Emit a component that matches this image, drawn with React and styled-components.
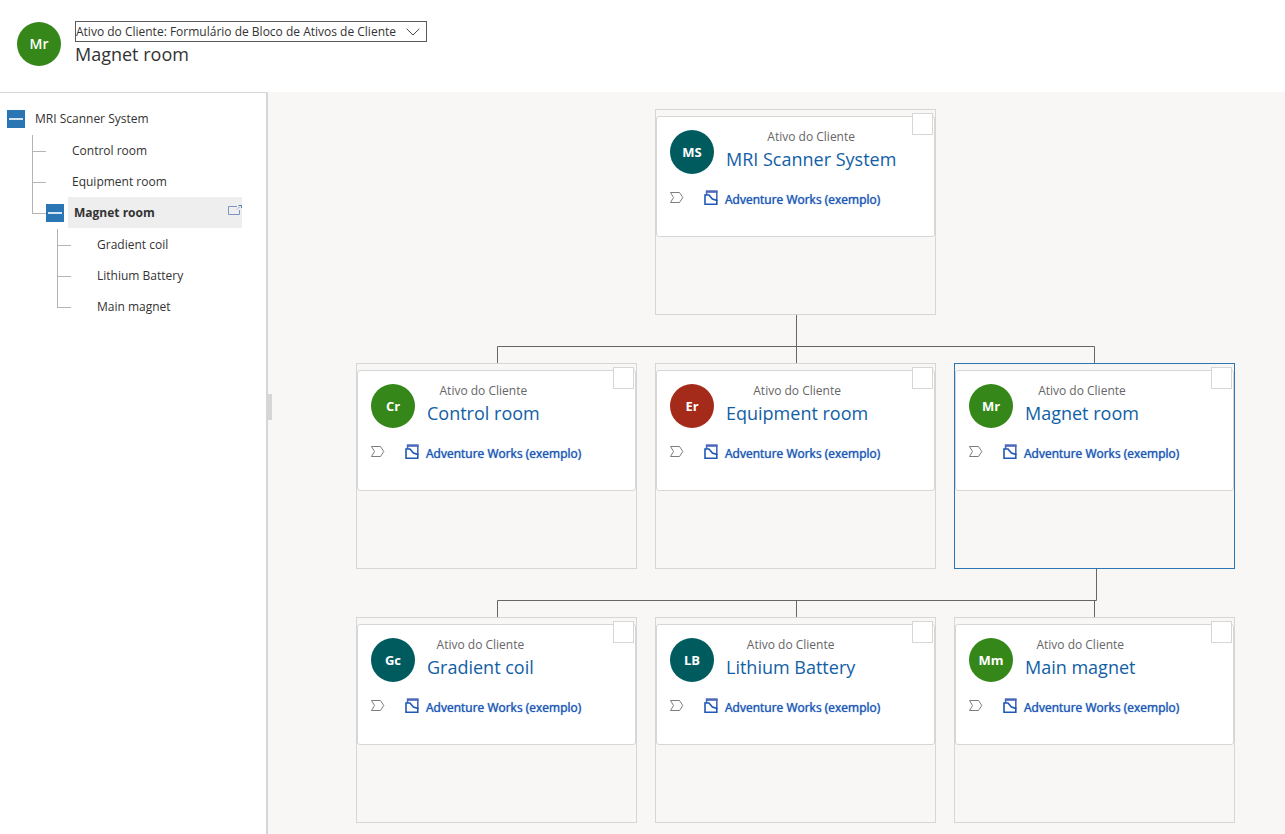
import React from 'react';
import styled, { createGlobalStyle } from 'styled-components';

const GlobalStyle = createGlobalStyle`
    *, *::before, *::after {
        box-sizing: border-box;
    }

    body {
        margin: 0;
        background: #ffffff;
        color: #333333;
        font-family: 'Open Sans', 'Noto Sans', sans-serif;
        font-size: 12px;
        line-height: 16px;
    }

    a {
        color: inherit;
        text-decoration: none;
    }

    button, input, select {
        margin: 0;
        font: inherit;
        color: inherit;
    }
`;

const GREEN = '#348718';
const TEAL = '#005b5f';
const RED = '#a42a1a';

const Page = styled.div`
    min-height: 100vh;
    display: flex;
    flex-direction: column;
`;

const Header = styled.header`
    display: flex;
    align-items: center;
    gap: 14px;
    height: 92px;
    padding: 0 17px 4px;
`;

const Avatar = styled.div`
    flex: none;
    display: flex;
    align-items: center;
    justify-content: center;
    width: 44px;
    height: 44px;
    border-radius: 50%;
    background: ${props => props.$color};
    color: #ffffff;
    font-size: ${props => props.$bold ? 13 : 14}px;
    font-weight: ${props => props.$bold ? 700 : 600};
`;

const HeaderText = styled.div`
    display: flex;
    flex-direction: column;
    align-items: flex-start;
`;

const FormPicker = styled.label`
    position: relative;
    display: flex;

    svg {
        position: absolute;
        top: 7px;
        right: 7px;
        pointer-events: none;
    }
`;

const FormSelect = styled.select`
    appearance: none;
    height: 21px;
    padding: 0 29px 0 0;
    border: 1px solid #5a5a5a;
    border-radius: 0;
    background: #ffffff;
`;

const Title = styled.h1`
    margin: 0;
    font-size: 18px;
    font-weight: 400;
    line-height: 25px;
`;

const Body = styled.div`
    flex: 1;
    display: flex;
`;

const Sidebar = styled.nav`
    position: relative;
    flex: none;
    width: 268px;
    padding: 10px 24px 0 0;
    border-top: 1px solid #d6d6d6;
    border-right: 2px solid #d6d6d6;
`;

const Splitter = styled.div`
    position: absolute;
    top: 301px;
    right: -6px;
    width: 5px;
    height: 26px;
    background: #d6d6d6;
    cursor: col-resize;
`;

const TreeList = styled.ul`
    margin: ${props => props.$indent ? '1px 0 0' : '0'};
    padding: 0 0 0 ${props => props.$indent || 0}px;
    list-style: none;
`;

const TreeRow = styled.div`
    display: flex;
    align-items: center;
    height: 31px;
    padding-left: ${props => props.$root ? 7 : 0}px;
`;

const Branch = styled.span`
    flex: none;
    align-self: stretch;
    width: 14px;
    background:
        linear-gradient(#b3b3b3, #b3b3b3) 0 0 / 1px ${props => props.$last ? '17px' : '100%'} no-repeat,
        linear-gradient(#b3b3b3, #b3b3b3) 0 16px / 100% 1px no-repeat;
`;

const Toggle = styled.button`
    flex: none;
    display: flex;
    align-items: center;
    justify-content: center;
    width: 18px;
    height: 18px;
    padding: 0;
    border: 0;
    background: #2a76b5;
    cursor: pointer;
`;

const TreeLabel = styled.a`
    flex: 1;
    align-self: stretch;
    display: flex;
    align-items: center;
    justify-content: space-between;
    margin-left: ${props => props.$leaf ? 22 : 4}px;
    padding-left: ${props => props.$leaf ? 4 : 6}px;
    background: ${props => props.$selected ? '#eeeeee' : 'transparent'};
    font-weight: ${props => props.$selected ? 700 : 400};

    svg {
        margin-bottom: 5px;
    }
`;

const Canvas = styled.main`
    flex: 1;
    display: flex;
    justify-content: center;
    padding: 17px 0 11px 38px;
    background: #f8f7f6;
`;

const Chart = styled.div`
    display: flex;
    flex-direction: column;
    align-items: center;
`;

const Level = styled.div`
    display: flex;
    gap: 18px;
`;

const Connector = styled.svg`
    display: block;
    width: 879px;
    height: 48px;
    fill: none;
    stroke: #666666;
`;

const Node = styled.article`
    position: relative;
    width: 281px;
    min-height: 206px;
    padding-top: 6px;
    border: 1px solid ${props => props.$selected ? '#2a76b5' : '#d6d6d6'};
`;

const NodeCheck = styled.input`
    appearance: none;
    position: absolute;
    top: 3px;
    right: 2px;
    width: 21px;
    height: 22px;
    border: 1px solid #d6d6d6;
    background: #ffffff;
`;

const Card = styled.div`
    min-height: 121px;
    padding: 13px;
    border: 1px solid #d6d6d6;
    border-radius: 3px;
    background: #ffffff;
`;

const CardTop = styled.div`
    display: flex;
    gap: 12px;
`;

const CardHeading = styled.div`
    display: flex;
    flex-direction: column;
    align-items: center;
`;

const CardType = styled.span`
    color: #666666;
    line-height: 14px;
`;

const CardName = styled.a`
    color: #1160a5;
    font-size: 18px;
    line-height: 30px;
`;

const CardFooter = styled.div`
    display: flex;
    align-items: flex-start;
    margin-top: 16px;
`;

const AccountLink = styled.a`
    display: flex;
    align-items: flex-start;
    gap: 6px;
    margin-left: 20px;
    color: #1f58b5;
    font-weight: 500;
    text-shadow: 0 0 1px currentColor;

    span {
        padding-top: 2px;
    }
`;

const ChevronDown = () => (
    <svg width="14" height="8" viewBox="0 0 14 8" fill="none" stroke="#444444" aria-hidden="true">
        <path d="M0.7 0.8L7 7L13.3 0.8" />
    </svg>
);

const MinusIcon = () => (
    <svg width="14" height="2" viewBox="0 0 14 2" aria-hidden="true">
        <rect width="14" height="2" fill="#d4e4f0" />
    </svg>
);

const OpenIcon = () => (
    <svg width="14" height="11" viewBox="0 0 14 11" fill="none" stroke="#7f93c4" aria-hidden="true">
        <path d="M9 1.5H0.5V9.5H11.5V5" />
        <path d="M9 4.5L12 1.5" strokeDasharray="1.4 0.7" />
        <path d="M10.5 0.5H13.5V3" stroke="#5478b8" />
    </svg>
);

const TagIcon = () => (
    <svg width="14" height="14" viewBox="0 -1 14 14" fill="none" stroke="#7d7d7d" aria-hidden="true">
        <path d="M0.5 1.5H9.5L12.8 6.5L9.5 11.5H0.5L3.5 6.5Z" />
    </svg>
);

const AccountIcon = () => (
    <svg width="15" height="16" viewBox="0 0 15 16" fill="none" stroke="#1f58b5" aria-hidden="true">
        <path d="M2 0.5H13.5V3H2Z" fill="#6f82c4" stroke="none" />
        <path d="M2.6 5V1.2H12.8V11" stroke="#4a68bb" strokeWidth="1.6" />
        <path d="M1 14.2V5H5L8.4 9L12.8 10.4V14.2Z" strokeWidth="1.6" />
    </svg>
);

const tree = {
    name: 'MRI Scanner System',
    children: [
        { name: 'Control room' },
        { name: 'Equipment room' },
        {
            name: 'Magnet room',
            selected: true,
            children: [
                { name: 'Gradient coil' },
                { name: 'Lithium Battery' },
                { name: 'Main magnet' },
            ],
        },
    ],
};

const levels = [
    [
        { initials: 'MS', name: 'MRI Scanner System', color: TEAL },
    ],
    [
        { initials: 'Cr', name: 'Control room', color: GREEN },
        { initials: 'Er', name: 'Equipment room', color: RED },
        { initials: 'Mr', name: 'Magnet room', color: GREEN, selected: true },
    ],
    [
        { initials: 'Gc', name: 'Gradient coil', color: TEAL },
        { initials: 'LB', name: 'Lithium Battery', color: TEAL },
        { initials: 'Mm', name: 'Main magnet', color: GREEN },
    ],
];

// line from the parent card down to each card of the next level
const connectors = [
    'M440.5 0V48M141.5 48V31.5H738.5V48',
    'M740.5 0V31.5H141.5V48M440.5 31.5V48M738.5 31.5V48',
];

const TreeItem = ({ item, depth = 0, last }) => (
    <li>
        <TreeRow $root={depth === 0}>
            {depth > 0 && <Branch $last={last} />}
            {item.children && (
                <Toggle type="button" aria-label={`Recolher ${item.name}`} aria-expanded="true">
                    <MinusIcon />
                </Toggle>
            )}
            <TreeLabel href="#" $leaf={!item.children} $selected={item.selected}>
                {item.name}
                {item.selected && <OpenIcon />}
            </TreeLabel>
        </TreeRow>
        {item.children && (
            <TreeList $indent={depth === 0 ? 32 : 25}>
                {item.children.map((child, i) => (
                    <TreeItem
                        key={child.name}
                        item={child}
                        depth={depth + 1}
                        last={i === item.children.length - 1} />
                ))}
            </TreeList>
        )}
    </li>
);

const AssetNode = ({ asset }) => (
    <Node $selected={asset.selected}>
        <Card>
            <CardTop>
                <Avatar $color={asset.color} $bold>{asset.initials}</Avatar>
                <CardHeading>
                    <CardType>Ativo do Cliente</CardType>
                    <CardName href="#">{asset.name}</CardName>
                </CardHeading>
            </CardTop>
            <CardFooter>
                <TagIcon />
                <AccountLink href="#">
                    <AccountIcon />
                    <span>Adventure Works (exemplo)</span>
                </AccountLink>
            </CardFooter>
        </Card>
        <NodeCheck type="checkbox" aria-label={asset.name} />
    </Node>
);

const App = () => (
    <Page>
        <GlobalStyle />
        <Header>
            <Avatar $color={GREEN}>Mr</Avatar>
            <HeaderText>
                <FormPicker>
                    <FormSelect aria-label="Formulário">
                        <option>Ativo do Cliente: Formulário de Bloco de Ativos de Cliente</option>
                    </FormSelect>
                    <ChevronDown />
                </FormPicker>
                <Title>Magnet room</Title>
            </HeaderText>
        </Header>
        <Body>
            <Sidebar>
                <TreeList>
                    <TreeItem item={tree} />
                </TreeList>
                <Splitter />
            </Sidebar>
            <Canvas>
                <Chart>
                    {levels.map((level, i) => (
                        <React.Fragment key={level[0].name}>
                            {i > 0 && (
                                <Connector viewBox="0 0 879 48" aria-hidden="true">
                                    <path d={connectors[i - 1]} />
                                </Connector>
                            )}
                            <Level>
                                {level.map(asset => (
                                    <AssetNode key={asset.name} asset={asset} />
                                ))}
                            </Level>
                        </React.Fragment>
                    ))}
                </Chart>
            </Canvas>
        </Body>
    </Page>
);

export default App;
